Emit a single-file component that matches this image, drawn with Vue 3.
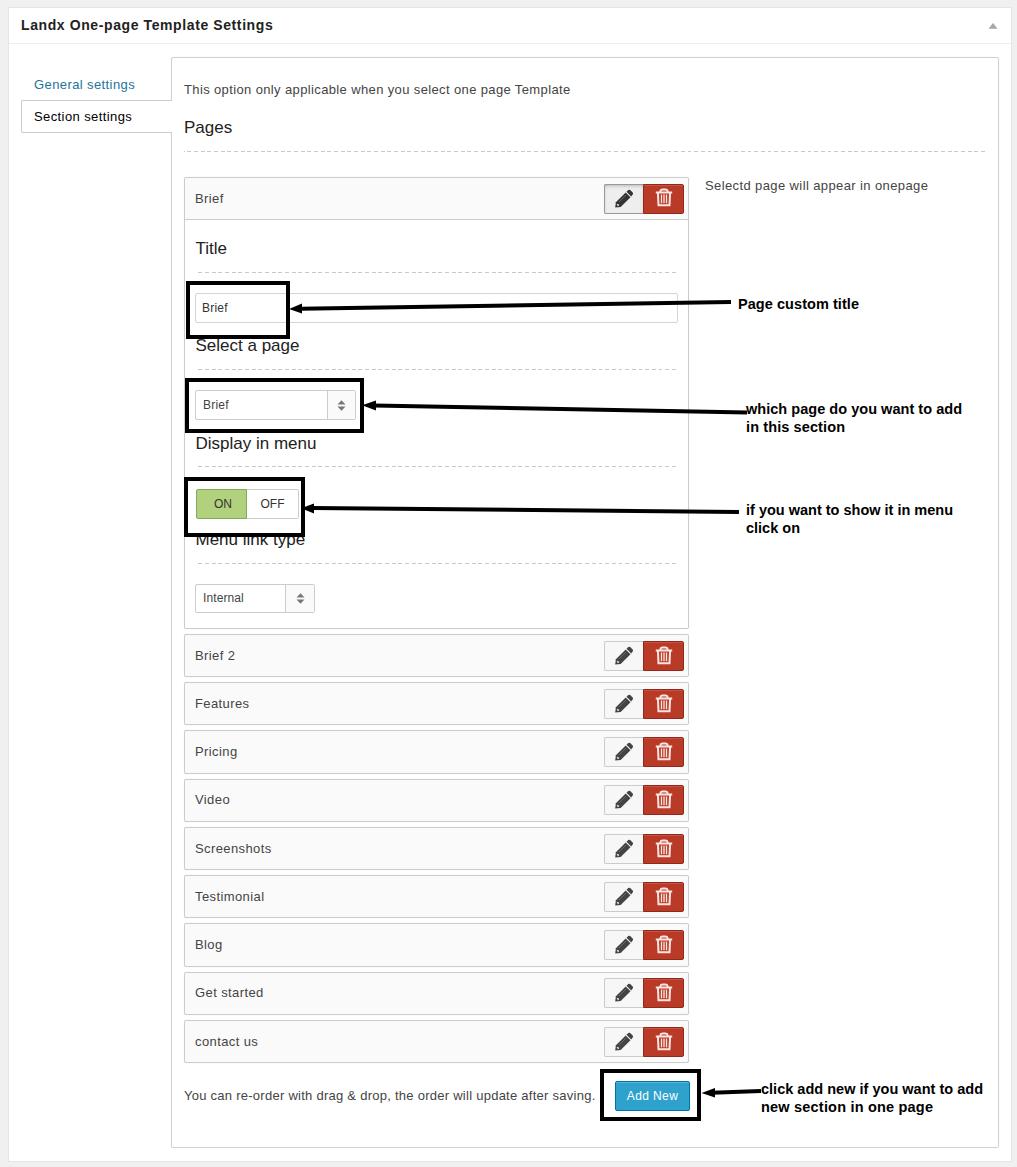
<script setup>
const rows = ['Brief 2', 'Features', 'Pricing', 'Video', 'Screenshots', 'Testimonial', 'Blog', 'Get started', 'contact us']
const all = [{ name: 'Brief', open: true }, ...rows.map((name) => ({ name, open: false }))]
const notes = [
  { x: 738, y: 309, w: 121, t: 'Page custom title' },
  { x: 746, y: 414, w: 216, t: 'which page do you want to add' },
  { x: 746, y: 432, w: 99, t: 'in this section' },
  { x: 746, y: 515, w: 207, t: 'if you want to show it in menu' },
  { x: 746, y: 533, w: 54, t: 'click on' },
  { x: 761, y: 1094, w: 222, t: 'click add new if you want to add' },
  { x: 761, y: 1112, w: 172, t: 'new section in one page' }
]
</script>

<template>
  <div class="page">
    <section class="postbox">
      <header class="head">
        <h3>Landx One-page Template Settings</h3>
        <svg class="tri" width="10" height="6" viewBox="0 0 10 6"><path d="M5 0 9.5 5.7H.5z" fill="#a4a8ac" /></svg>
      </header>
      <div class="cols">
        <nav class="tabs">
          <a class="tab">General settings</a>
          <a class="tab active">Section settings</a>
        </nav>
        <main class="panel">
          <p class="intro">This option only applicable when you select one page Template</p>
          <h4 class="pages">Pages</h4>
          <div class="dash"></div>
          <div class="split">
            <div class="list">
              <article v-for="r in all" :key="r.name" class="item" :class="{ open: r.open }">
                <div class="bar">
                  <span class="name">{{ r.name }}</span>
                  <div class="btns">
                    <button class="edit">
                      <svg width="20" height="20" viewBox="0 0 20 20">
                        <path d="M1.200 18.600 1.900 13.200 11.700 3.500 16.500 8.200 6.700 17.900z" />
                        <path d="M12.500 2.700 14.300 1Q15.200.3 16.200 1.100L18.700 3.600Q19.500 4.600 18.700 5.500L17.200 7.400z" />
                        <path d="M3.200 15.200 4.700 16.600" fill="none" stroke="#eee" stroke-width="1.500" />
                        <path d="M5 13 12 6" stroke="#777" stroke-width=".7" />
                      </svg>
                    </button>
                    <button class="del">
                      <svg width="18" height="19" viewBox="0 0 18 19" fill="none" stroke="#fbe6e2" stroke-width="2">
                        <path d="M.8 4.500H17.200M5.400 4.300V3.200Q5.600 1.500 7.200 1.500H10.800Q12.400 1.500 12.600 3.200V4.300M2.900 4.500 3.500 17.300H14.500L15.100 4.500" />
                        <path d="M6.500 6.500V15.300M9 6.500V15.300M11.500 6.500V15.300" stroke-width="1.300" />
                      </svg>
                    </button>
                  </div>
                </div>
                <div v-if="r.open" class="body">
                  <div class="field">
                    <h4>Title</h4>
                    <div class="dash"></div>
                    <div class="input">Brief</div>
                  </div>
                  <div class="field">
                    <h4>Select a page</h4>
                    <div class="dash"></div>
                    <div class="select wide"><span>Brief</span><i><svg width="9" height="11" viewBox="0 0 9 11" fill="#777"><path d="M4.500.3 8.500 4.500H.5zM.5 6.500H8.500L4.500 10.700z" /></svg></i></div>
                  </div>
                  <div class="field">
                    <h4 class="low">Display in menu</h4>
                    <div class="dash"></div>
                    <div class="toggle"><b>ON</b><span>OFF</span></div>
                  </div>
                  <div class="field">
                    <h4>Menu link type</h4>
                    <div class="dash"></div>
                    <div class="select narrow"><span>Internal</span><i><svg width="9" height="11" viewBox="0 0 9 11" fill="#777"><path d="M4.500.3 8.500 4.500H.5zM.5 6.500H8.500L4.500 10.700z" /></svg></i></div>
                  </div>
                </div>
              </article>
            </div>
            <p class="side">Selectd page will appear in onepage</p>
          </div>
          <footer class="foot">
            <span>You can re-order with drag &amp; drop, the order will update after saving.</span>
            <button class="add">Add New</button>
          </footer>
        </main>
      </div>
    </section>

    <svg class="overlay" width="1017" height="1167" viewBox="0 0 1017 1167">
      <g fill="none" stroke="#000" stroke-width="4">
        <rect x="188" y="283" width="100" height="54" />
        <rect x="187" y="380" width="175" height="51" />
        <rect x="186" y="479" width="117" height="56" />
        <rect x="602" y="1071" width="97" height="48" />
        <path d="M300 308.700 731 302M374 405.500 747 412.500M312 508 739 512M712 1092.800 761 1091" />
      </g>
      <path d="M289 309 302 303.500V313.500zM362 405.300 376 400.500V410.500zM301 508.300 314 503.500V513.500zM701.500 1093 715 1088V1097.500z" />
      <text v-for="n in notes" :key="n.t" :x="n.x" :y="n.y" :textLength="n.w">{{ n.t }}</text>
    </svg>
  </div>
</template>

<style>
body { margin: 0; background: #f0f0f0; }
</style>

<style scoped>
* { box-sizing: border-box; }
.page { position: relative; width: 1017px; height: 1167px; padding: 7px 0 0 8px; background: #f0f0f0; font: 13px/18px "Liberation Sans", Arial, sans-serif; letter-spacing: .4px; color: #444; overflow: hidden; }
h3, h4, p { margin: 0; font-weight: 400; }
button { font: inherit; padding: 0; margin: 0; letter-spacing: inherit; }
.postbox { width: 1004px; height: 1155px; background: #fff; border: 1px solid #e5e5e5; }
.head { height: 36px; display: flex; justify-content: space-between; align-items: center; padding: 0 13px 0 12px; border-bottom: 1px solid #eee; }
.head h3 { font-size: 14px; font-weight: 700; letter-spacing: .6px; color: #222; padding-bottom: 2px; }
.cols { display: flex; padding: 13px 12px 0; }
.tabs { width: 151px; padding-top: 11px; position: relative; z-index: 1; }
.tab { display: block; height: 33px; line-height: 31px; padding-left: 12px; border: 1px solid transparent; color: #21759b; }
.tab.active { width: 151px; color: #000; background: #fff; border-color: #ccc; border-right: 0; border-radius: 2px 0 0 2px; margin-top: -1px; }
.panel { width: 829px; height: 1091px; margin-left: -1px; border: 1px solid #d2d2d2; border-radius: 2px; padding: 23px 12px 0; box-shadow: 0 0 1px #ddd; }
.intro { height: 18px; letter-spacing: .37px; white-space: nowrap; }
.pages { font-size: 17px; line-height: 22px; margin-top: 18px; color: #222; letter-spacing: 0; }
.dash { height: 1px; background: repeating-linear-gradient(90deg, #c8c8c8 0 .5px, transparent .5px 3.300px, #c8c8c8 3.300px 6.670px); }
.pages + .dash { margin-top: 12px; }
.split { display: flex; margin-top: 25px; }
.list { width: 505px; flex: none; display: flex; flex-direction: column; gap: 5px; }
.item { border: 1px solid #ccc; border-radius: 2px; background: #fafafa; height: 43.230px; box-shadow: 0 0 1px #ddd; }
.item.open { height: 452px; background: #fff; }
.bar { height: 41.500px; padding: 0 4px 0 10px; display: flex; justify-content: space-between; align-items: center; }
.open .bar { height: 42px; border-bottom: 1px solid #ccc; background: #fafafa; }
.btns { display: flex; width: 80px; height: 30px; }
.edit, .del { display: flex; align-items: center; justify-content: center; height: 30px; }
.edit { width: 39px; background: #f7f7f7; border: 1px solid #ccc; border-right: 0; border-radius: 2px 0 0 2px; fill: #444; }
.open .edit { background: #eee; border-color: #999; box-shadow: inset 0 2px 5px -3px rgba(0,0,0,.5); fill: #333; }
.del { width: 41px; background: #b83a27; border: 1px solid #8f2a1b; border-radius: 0 2px 2px 0; box-shadow: inset 0 1px 0 #c9533f; }
.del svg { margin-top: -1px; }
.open .del svg { margin-top: -2px; }
.body { padding: 18px 10px 0; }
.field { height: 97px; }
.field h4 { font-size: 17px; line-height: 22px; color: #222; letter-spacing: 0; padding-left: .5px; }
.field h4.low { position: relative; top: 1px; }
.field .dash { margin: 12px 0 20px; }
.input { height: 30px; border: 1px solid #d5d5d5; border-radius: 2px; padding-left: 6px; line-height: 28px; font-size: 12px; color: #333; letter-spacing: .2px; }
.select { display: flex; width: 121px; height: 30px; border: 1px solid #ccc; border-radius: 2px; line-height: 28px; font-size: 12px; letter-spacing: .2px; }
.select.wide { width: 161px; }
.select.narrow { width: 120px; height: 29px; line-height: 27px; letter-spacing: .1px; }
.select span { flex: 1; padding-left: 7px; }
.select i { width: 29px; border-left: 1px solid #ccc; background: #fafafa; display: flex; align-items: center; justify-content: center; }
.select.wide i { width: 28px; }
.toggle { display: flex; width: 103px; height: 30px; margin: 22px 0 0 1px; font-size: 12px; letter-spacing: 0; line-height: 28px; text-align: center; color: #333; }
.field .dash:has(+ .toggle) { margin-bottom: 22px; }
.toggle b { width: 51px; font-weight: 400; background: #b2d17c; border: 1px solid #87a85a; border-radius: 2px 0 0 2px; padding-left: 3px; }
.toggle span { width: 52px; border: 1px solid #ccc; border-left: 0; border-radius: 0 2px 2px 0; }
.side { margin-left: 16px; white-space: nowrap; letter-spacing: .39px; }
.foot { display: flex; margin-top: 18px; }
.foot span { width: 431px; padding-top: 6px; white-space: nowrap; letter-spacing: .26px; }
.add { width: 75px; height: 30px; background: #2ea2cc; border: 1px solid #0074a2; border-radius: 2px; color: #fff; font-size: 12px; box-shadow: inset 0 1px 0 #51b8dc; }
.overlay { position: absolute; left: 0; top: 0; z-index: 5; }
.overlay text { font: 700 14.500px "Liberation Sans", Arial, sans-serif; letter-spacing: 0; fill: #000; }
</style>
